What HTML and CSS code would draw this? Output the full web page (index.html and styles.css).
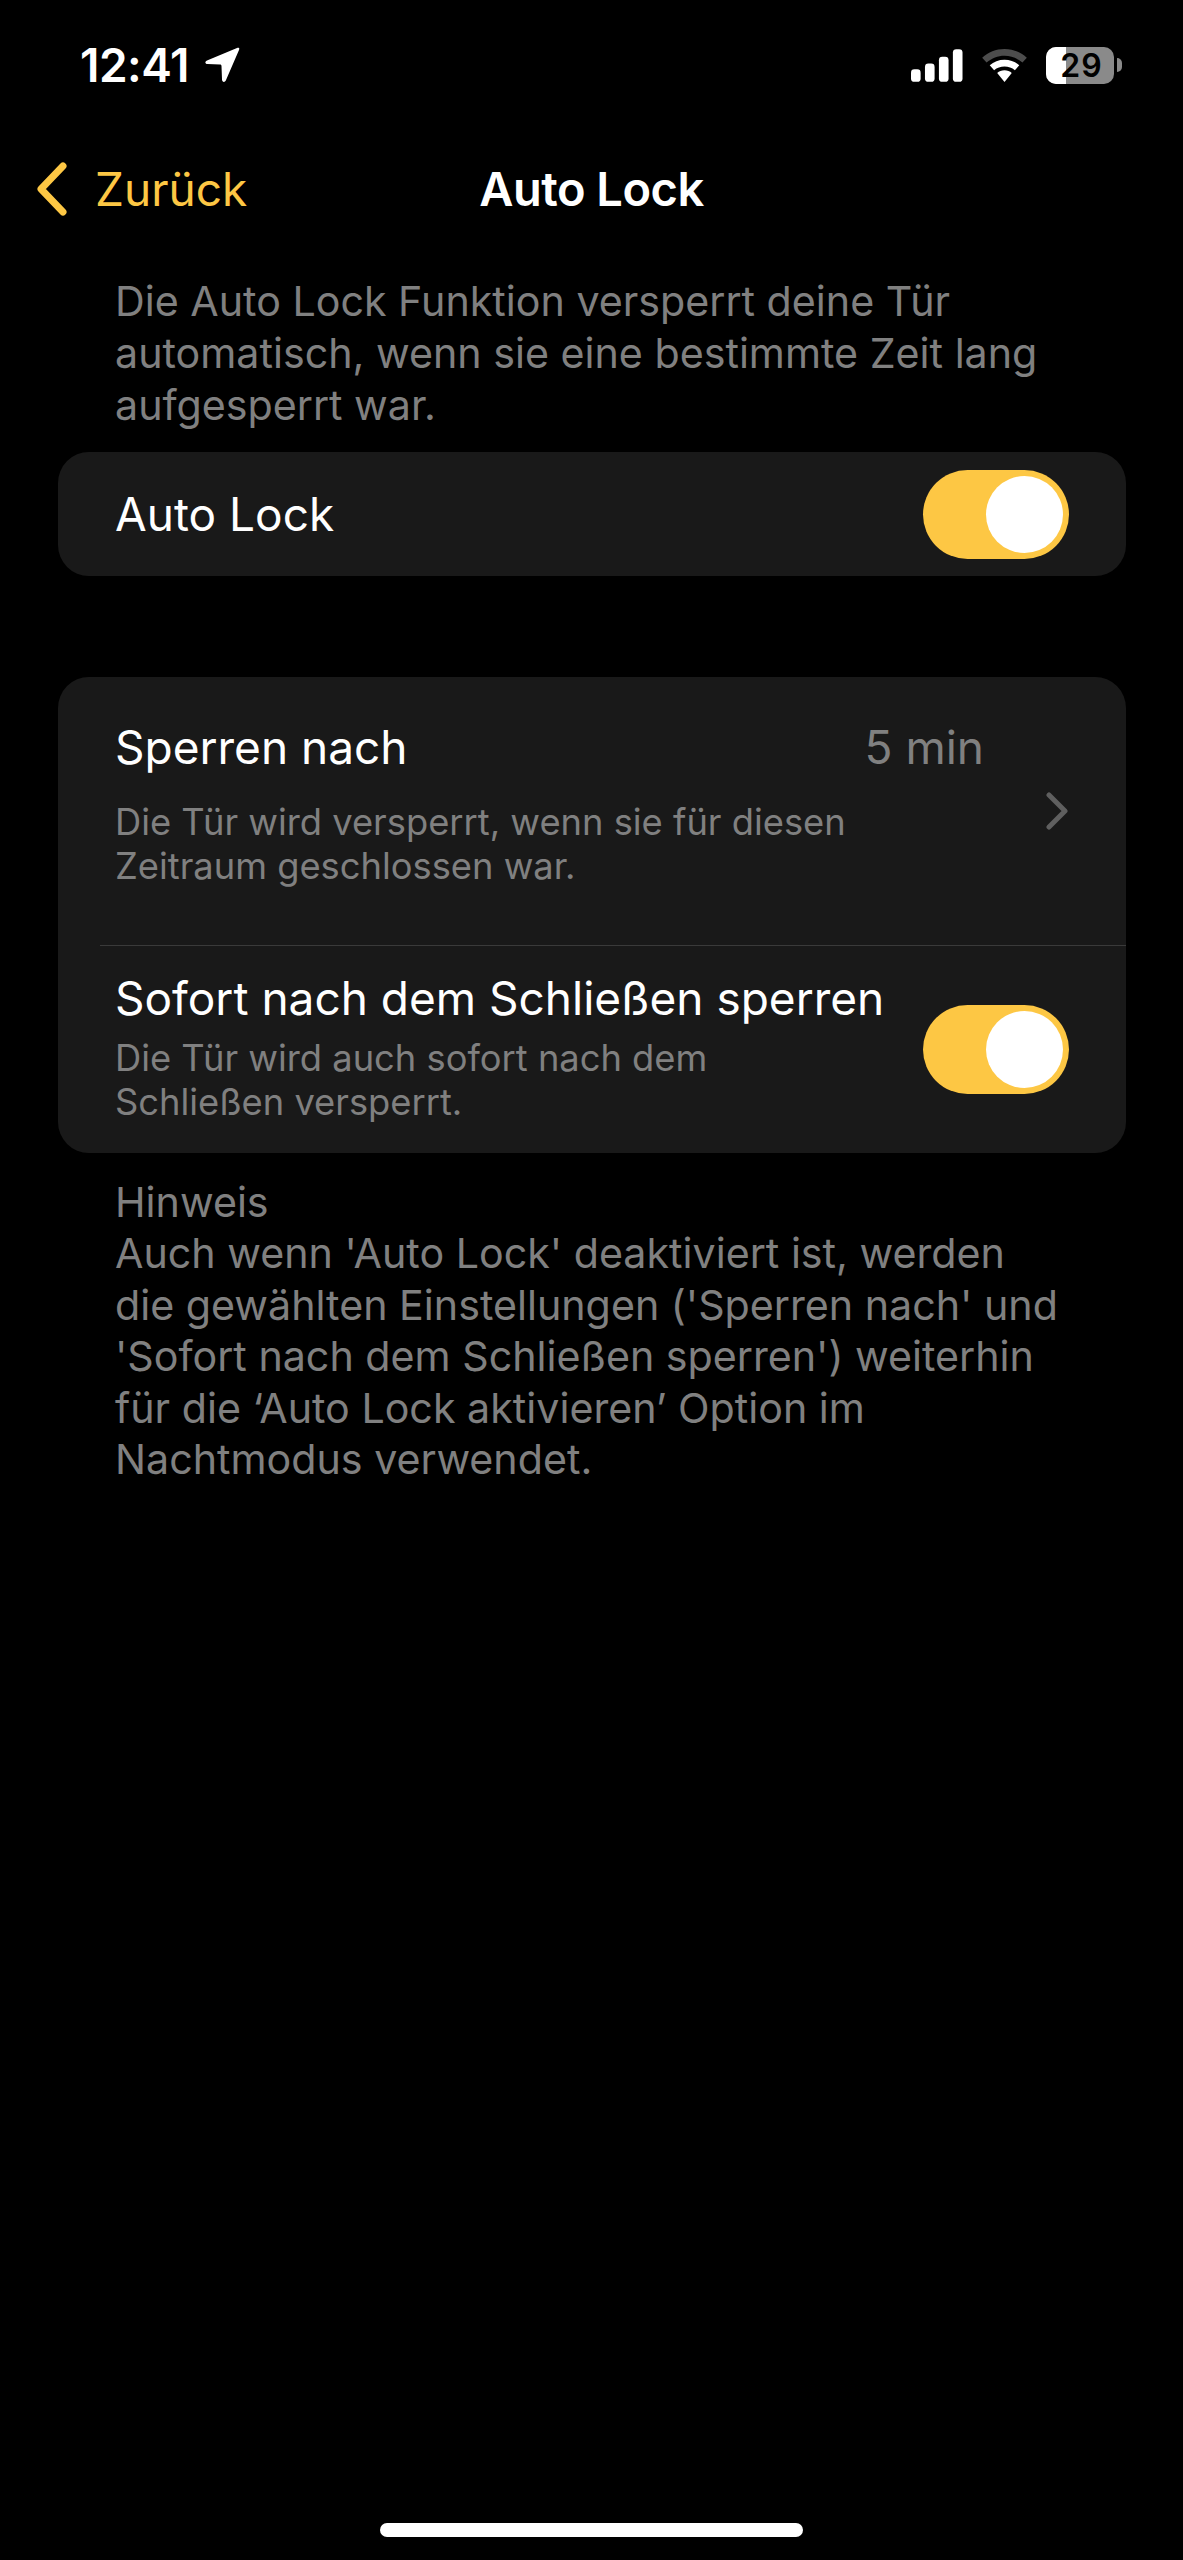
FILE: index.html
```html
<!DOCTYPE html>
<html lang="de">
<head>
  <meta charset="UTF-8">
  <meta name="viewport" content="width=device-width, initial-scale=1.0" />
  <title>Auto Lock</title>
  <link rel="stylesheet" href="styles.css">
</head>
<body>
  <div class="screen">
    <div class="status-bar">
      <div class="status-left">
        <span class="time">12:41</span>
        <svg class="location" viewBox="0 0 35 36" width="35" height="36"><path d="M32 1 2 13.500C-.5 14.600 0 17 2.500 17.100L15 17.500c1 0 1.500.6 1.500 1.500L17 32.500c.1 2.800 2.800 3.200 3.800 1L34 3C34.800 1 33.800.2 32 1Z" fill="#fff"/></svg>
      </div>
      <div class="status-right">
        <svg viewBox="0 0 54 34" width="52" height="33"><rect x="0" y="21" width="10" height="13" rx="3.500" fill="#fff"/><rect x="14.500" y="15" width="10" height="19" rx="3.500" fill="#fff"/><rect x="29" y="8" width="10" height="26" rx="3.500" fill="#fff"/><rect x="43.500" y="0" width="10" height="34" rx="3.500" fill="#fff"/></svg>
        <svg viewBox="0 0 46 34" width="45" height="33"><path d="M23 0C14 0 6.500 3.200 0 9l4.500 5C10 9.500 16 7 23 7s13 2.500 18.500 7L46 9C39.500 3.200 32 0 23 0Z" fill="#4d4d4d"/><path d="M23 11c-6 0-11 2-15.200 5.800l4.500 5C15.300 19.200 19 18 23 18s7.700 1.200 10.700 3.800l4.500-5C34 13 29 11 23 11Z" fill="#fff"/><path d="M23 22c-3 0-5.500 1-7.500 2.800L23 34l7.500-9.200C28.500 23 26 22 23 22Z" fill="#fff"/></svg>
        <div class="battery">
          <div class="battery-body"><span class="battery-level"></span><span class="battery-text">29</span></div>
          <span class="battery-cap"></span>
        </div>
      </div>
    </div>

    <div class="nav-bar">
      <div class="back">
        <svg viewBox="0 0 32 54" width="32" height="54"><path d="M27 4 5 27l22 23" fill="none" stroke="#fdc744" stroke-width="7" stroke-linecap="round" stroke-linejoin="round"/></svg>
        <span>Zurück</span>
      </div>
      <div class="nav-title">Auto Lock</div>
    </div>

    <p class="note intro">Die Auto Lock Funktion versperrt deine Tür automatisch, wenn sie eine bestimmte Zeit lang aufgesperrt war.</p>

    <div class="card card-single">
      <div class="row-title">Auto Lock</div>
      <div class="toggle"><span class="thumb"></span></div>
    </div>

    <div class="card card-group">
      <div class="row row-after">
        <div class="row-main">
          <div class="row-head">
            <span class="row-title">Sperren nach</span>
            <span class="row-value">5 min</span>
          </div>
          <div class="row-sub">Die Tür wird versperrt, wenn sie für diesen<br>Zeitraum geschlossen war.</div>
        </div>
        <svg class="chevron" viewBox="0 0 24 38" width="24" height="38"><path d="M4 3l16 16L4 35" fill="none" stroke="#5f5f5f" stroke-width="5" stroke-linecap="round" stroke-linejoin="round"/></svg>
      </div>
      <div class="divider"></div>
      <div class="row row-instant">
        <div class="row-main">
          <div class="row-title">Sofort nach dem Schließen sperren</div>
          <div class="row-sub">Die Tür wird auch sofort nach dem<br>Schließen versperrt.</div>
        </div>
        <div class="toggle"><span class="thumb"></span></div>
      </div>
    </div>

    <p class="note hint">Hinweis<br>Auch wenn 'Auto Lock' deaktiviert ist, werden die gewählten Einstellungen ('Sperren nach' und 'Sofort nach dem Schließen sperren') weiterhin für die ‘Auto Lock aktivieren’ Option im Nachtmodus verwendet.</p>

    <div class="home-indicator"></div>
  </div>
</body>
</html>
```

FILE: styles.css
```css
* {
  box-sizing: border-box;
}

body {
  margin: 0;
  background: #000;
  color: #fff;
  font-family: Inter, "Liberation Sans", sans-serif;
}

.screen {
  position: relative;
  width: 1183px;
  height: 2560px;
  overflow: hidden;
}

.status-bar {
  display: flex;
  justify-content: space-between;
  align-items: center;
  height: 64px;
  margin-top: 33px;
  padding: 0 61px 0 80px;
}

.status-left {
  display: flex;
  align-items: center;
  gap: 16px;
}

.time {
  font-size: 46px;
  font-weight: 600;
  letter-spacing: -0.5px;
}

.status-right {
  display: flex;
  align-items: center;
  gap: 19px;
}

.battery {
  display: flex;
  align-items: center;
  gap: 3px;
}

.battery-body {
  position: relative;
  display: flex;
  justify-content: center;
  align-items: center;
  width: 68px;
  height: 37px;
  padding-left: 3px;
  border-radius: 10px;
  background: #8a8a8a;
  overflow: hidden;
}

.battery-level {
  position: absolute;
  left: 0;
  top: 0;
  bottom: 0;
  width: 20px;
  background: #fff;
}

.battery-text {
  position: relative;
  color: #000;
  font-size: 32px;
  font-weight: 600;
  letter-spacing: 1px;
}

.battery-cap {
  width: 5px;
  height: 14px;
  border-radius: 0 7px 7px 0;
  background: #8a8a8a;
}

.nav-bar {
  position: relative;
  display: flex;
  align-items: center;
  justify-content: center;
  height: 66px;
  margin-top: 60px;
  padding-bottom: 3px;
}

.back {
  position: absolute;
  left: 36px;
  top: 4px;
  display: flex;
  align-items: center;
  gap: 27px;
  color: #fdc744;
  font-size: 46px;
}

.nav-title {
  font-size: 47px;
  font-weight: 600;
  letter-spacing: -0.5px;
}

.note {
  margin: 0;
  padding: 0 120px 0 115px;
  color: #808080;
  font-size: 41.2px;
  line-height: 52px;
}

.intro {
  margin-top: 52px;
}

.card {
  margin: 0 57px 0 58px;
  background: #191919;
  border-radius: 31px;
}

.card-single {
  display: flex;
  justify-content: space-between;
  align-items: center;
  height: 124px;
  margin-top: 21px;
  padding: 0 57px;
}

.card-group {
  height: 476px;
  margin-top: 101px;
}

.row {
  display: flex;
  align-items: center;
  justify-content: space-between;
  padding: 0 57px;
}

.row-main {
  flex: 1;
}

.row-after {
  height: 268px;
}

.row-after .row-main {
  padding-bottom: 15px;
}

.row-after .row-sub {
  margin-top: 25px;
}

.row-instant {
  height: 207px;
}

.row-instant .row-main {
  padding-bottom: 6px;
}

.row-instant .row-sub {
  margin-top: 10px;
}

.row-head {
  display: flex;
  justify-content: space-between;
  padding-right: 61px;
}

.row-title {
  font-size: 46px;
  line-height: 56px;
}

.row-value {
  color: #808080;
  font-size: 46px;
  line-height: 56px;
}

.row-sub {
  color: #808080;
  font-size: 36.3px;
  line-height: 44px;
}

.divider {
  height: 1px;
  margin-left: 42px;
  background: #3a3a3a;
}

.toggle {
  display: flex;
  justify-content: flex-end;
  align-items: center;
  flex-shrink: 0;
  width: 146px;
  height: 89px;
  padding-right: 6px;
  border-radius: 45px;
  background: #fdc744;
}

.thumb {
  width: 77px;
  height: 77px;
  border-radius: 50%;
  background: #fff;
}

.hint {
  margin-top: 24px;
  line-height: 51.4px;
}

.home-indicator {
  position: absolute;
  left: 380px;
  bottom: 23px;
  width: 423px;
  height: 14px;
  border-radius: 7px;
  background: #fff;
}
```
